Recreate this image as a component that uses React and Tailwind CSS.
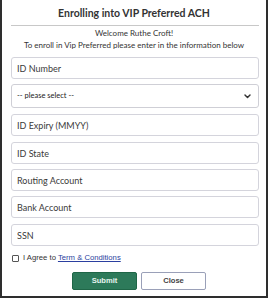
import React from "react";

function Field({ label, className = "" }) {
  return (
    <input
      type="text"
      placeholder={label}
      className={`block w-[248px] h-[22px] border border-[#d4d4dc] rounded-[3px] bg-white pl-[5px] text-[9px] text-[#333] placeholder:text-[#3a3a3a] outline-none ${className}`}
      style={{ fontFamily: "Lato, 'Noto Sans', sans-serif" }}
    />
  );
}

export default function App() {
  return (
    <div className="w-[271px] h-[300px] bg-white">
      <div className="w-[268px] h-[298px] border-2 border-t-0 border-[#2e2e2e] px-[9px] bg-white" style={{ fontFamily: "Lato, 'Noto Sans', sans-serif" }}>
        <div className="pt-[5px] h-[21px] text-center text-[10.5px] leading-[16px] font-bold text-[#333]">
          Enrolling into VIP Preferred ACH
        </div>
        <div className="mt-[4px] h-px w-[248px] bg-[#c8c8c8]" />
        <div className="mt-[1px] text-center text-[8px] leading-[12px] text-[#333]">Welcome Ruthe Croft!</div>
        <div className="text-center text-[8px] leading-[12px] text-[#333] whitespace-nowrap">
          To enroll in Vip Preferred please enter in the information below
        </div>
        <Field label="ID Number" className="mt-[6px]" />
        <div className="mt-[5px] w-[248px] h-[24px] border border-[#cfcfd6] rounded-[3px] flex items-center justify-between pl-[5px] pr-[7px]">
          <span className="text-[7.5px] text-[#222]">-- please select --</span>
          <svg width="7" height="5" viewBox="0 0 8 6" fill="none">
            <path d="M1 1.2 L4 4.2 L7 1.2" stroke="#333" strokeWidth="1.7" strokeLinecap="round" strokeLinejoin="round" />
          </svg>
        </div>
        <Field label="ID Expiry (MMYY)" className="mt-[6px]" />
        <Field label="ID State" className="mt-[6px]" />
        <Field label="Routing Account" className="mt-[5px]" />
        <Field label="Bank Account" className="mt-[5px]" />
        <Field label="SSN" className="mt-[6px]" />
        <div className="mt-[6px] h-[12px] flex items-center text-[7.7px] text-[#333]" style={{ fontFamily: "'Liberation Sans', Arial, sans-serif" }}>
          <span className="ml-[1px] w-[7px] h-[7px] border border-[#555] rounded-[1px] bg-white" />
          <span className="ml-[4px]">I Agree to</span>
          <a href="#" className="ml-[2px] text-[#2b3fa0] underline">Term &amp; Conditions</a>
        </div>
        <div className="mt-[8px] flex pl-[61px] gap-[4px]" style={{ fontFamily: "'Liberation Sans', Arial, sans-serif" }}>
          <button className="w-[65px] h-[18px] bg-[#2d7a5a] border border-[#1f6647] rounded-[2px] text-[7.6px] font-bold text-[#e6f5ee]">
            Submit
          </button>
          <button className="w-[65px] h-[18px] bg-white border border-[#9aa0b8] rounded-[2px] text-[7.6px] font-bold text-[#444]">
            Close
          </button>
        </div>
      </div>
    </div>
  );
}
